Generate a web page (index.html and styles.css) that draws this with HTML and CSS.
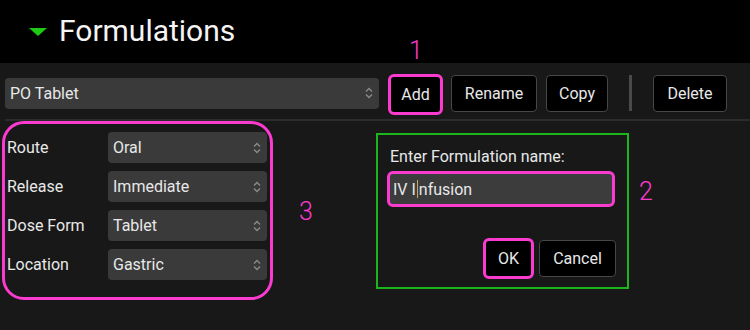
FILE: index.html
```html
<!DOCTYPE html>
<html lang="en">
<head>
    <meta charset="UTF-8">
    <title>Formulations</title>
    <link rel="stylesheet" href="styles.css">
</head>
<body>
    <div class="page">
        <header class="header">
            <span class="caret"></span>
            <h1>Formulations</h1>
        </header>

        <div class="toolbar">
            <div class="select wide">
                <span>PO Tablet</span>
                <svg class="spin" width="8" height="12" viewBox="0 0 8 12"><path d="M1 4.5 L4 1.5 L7 4.5 M1 7.5 L4 10.5 L7 7.5" fill="none" stroke="#8a8a8a" stroke-width="1.4"/></svg>
            </div>
            <button class="btn marked btn-add">Add</button>
            <button class="btn btn-rename">Rename</button>
            <button class="btn btn-copy">Copy</button>
            <span class="vsep"></span>
            <button class="btn btn-delete">Delete</button>
            <span class="note note-1">1</span>
        </div>
        <div class="rule"></div>

        <div class="content">
            <div class="props">
                <label>Route</label>
                <div class="select">
                    <span>Oral</span>
                    <svg class="spin" width="8" height="12" viewBox="0 0 8 12"><path d="M1 4.5 L4 1.5 L7 4.5 M1 7.5 L4 10.5 L7 7.5" fill="none" stroke="#8a8a8a" stroke-width="1.4"/></svg>
                </div>
                <label>Release</label>
                <div class="select">
                    <span>Immediate</span>
                    <svg class="spin" width="8" height="12" viewBox="0 0 8 12"><path d="M1 4.5 L4 1.5 L7 4.5 M1 7.5 L4 10.5 L7 7.5" fill="none" stroke="#8a8a8a" stroke-width="1.4"/></svg>
                </div>
                <label>Dose Form</label>
                <div class="select">
                    <span>Tablet</span>
                    <svg class="spin" width="8" height="12" viewBox="0 0 8 12"><path d="M1 4.5 L4 1.5 L7 4.5 M1 7.5 L4 10.5 L7 7.5" fill="none" stroke="#8a8a8a" stroke-width="1.4"/></svg>
                </div>
                <label>Location</label>
                <div class="select">
                    <span>Gastric</span>
                    <svg class="spin" width="8" height="12" viewBox="0 0 8 12"><path d="M1 4.5 L4 1.5 L7 4.5 M1 7.5 L4 10.5 L7 7.5" fill="none" stroke="#8a8a8a" stroke-width="1.4"/></svg>
                </div>
            </div>

            <span class="note note-3">3</span>

            <div class="dialog">
                <p class="prompt">Enter Formulation name:</p>
                <div class="field">IV I<span class="cursor"></span>nfusion</div>
                <div class="actions">
                    <button class="btn marked btn-ok">OK</button>
                    <button class="btn btn-cancel">Cancel</button>
                </div>
            </div>

            <span class="note note-2">2</span>
        </div>
    </div>
</body>
</html>
```

FILE: styles.css
```css
body {
    margin: 0;
    background-color: #181818;
    font-family: Roboto, "Noto Sans", sans-serif;
    color: #e8e8e8;
}
.page {
    position: relative;
    width: 750px;
    height: 330px;
    overflow: hidden;
}
.header {
    height: 63px;
    background-color: #000;
    display: flex;
    align-items: center;
    padding-left: 29px;
    box-sizing: border-box;
}
.caret {
    width: 0;
    height: 0;
    border-left: 9px solid transparent;
    border-right: 9px solid transparent;
    border-top: 8px solid #1ecb14;
    margin-right: 12px;
    margin-top: 0;
}
.header h1 {
    margin: 0;
    font-size: 30px;
    font-weight: 400;
    color: #f4f4f4;
    margin-top: -3px;
}

/* toolbar row */
.toolbar {
    position: relative;
    display: flex;
    align-items: center;
    height: 56px;
    padding: 4px 5px 0;
    box-sizing: border-box;
}
.select {
    display: flex;
    align-items: center;
    justify-content: space-between;
    height: 31px;
    background-color: #3a3a3a;
    border-radius: 4px;
    padding: 0 6px 0 5px;
    box-sizing: border-box;
    font-size: 16px;
}
.select.wide {
    width: 374px;
    margin-right: 9px;
}
.spin {
    flex-shrink: 0;
}
.btn {
    height: 37px;
    background-color: #000;
    border: 1.5px solid #474747;
    border-radius: 4px;
    color: #e8e8e8;
    font-family: Roboto, "Noto Sans", sans-serif;
    font-size: 16px;
    padding: 0;
    box-sizing: border-box;
}
.btn.marked {
    border: 3px solid #fb3bd0;
    border-radius: 6px;
    height: 41px;
}
.btn-add {
    width: 55px;
    margin-right: 8px;
    margin-top: 3px;
}
.btn-rename {
    width: 86px;
    margin-right: 9px;
}
.btn-copy {
    width: 62px;
}
.vsep {
    width: 3px;
    height: 36px;
    background-color: #4a4a4a;
    margin: 0 21px 0 21px;
}
.btn-delete {
    width: 74px;
}
.rule {
    height: 2px;
    margin-left: 5px;
    background-color: #2c2c2c;
}

/* content */
.content {
    display: flex;
    align-items: flex-start;
    padding-left: 2px;
    padding-top: 0;
}
.props {
    width: 271px;
    height: 179px;
    border: 3px solid #fb3bd0;
    border-radius: 22px;
    box-sizing: border-box;
    display: grid;
    grid-template-columns: 101px 159px;
    grid-auto-rows: 31px;
    row-gap: 8px;
    align-items: center;
    padding: 8px 0 0 2px;
}
.props label {
    font-size: 16px;
}
.dialog {
    width: 253px;
    height: 156px;
    margin-top: 12px;
    margin-left: 103px;
    border: 2px solid #1cb51c;
    box-sizing: border-box;
    padding: 12px 12px 0 9px;
}
.prompt {
    margin: 0 0 4px 3px;
    font-size: 16px;
    line-height: 20px;
}
.field {
    height: 36px;
    border: 3px solid #fb3bd0;
    border-radius: 6px;
    background-color: #3c3c3c;
    box-sizing: border-box;
    display: flex;
    align-items: center;
    padding-left: 3px;
    font-size: 16px;
}
.cursor {
    display: inline-block;
    width: 1px;
    height: 18px;
    background-color: #c8a85a;
    margin: 0 1px;
}
.actions {
    display: flex;
    justify-content: flex-end;
    align-items: center;
    gap: 5px;
    margin-top: 31px;
    margin-right: -1px;
}
.btn-ok {
    width: 51px;
}
.btn-cancel {
    width: 77px;
}

/* annotation numbers */
.note {
    position: absolute;
    color: #fb3bd0;
    font-size: 25px;
    font-weight: 300;
    line-height: 1;
}
.note-1 {
    left: 409px;
    top: -25px;
}
.note-2 {
    left: 639px;
    top: 179px;
}
.note-3 {
    left: 299px;
    top: 199px;
}
```
